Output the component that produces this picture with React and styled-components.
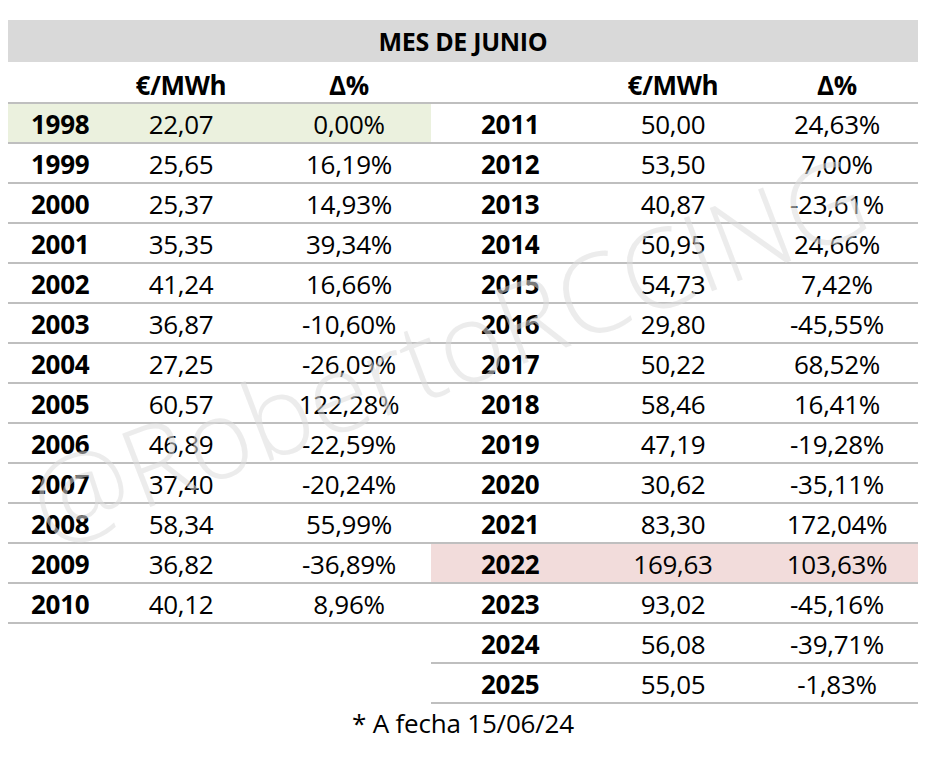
import React from "react";
import styled, { createGlobalStyle } from "styled-components";

const GlobalStyle = createGlobalStyle`
  html, body { margin: 0; padding: 0; background: #ffffff; }
  body { font-family: "Open Sans", "Noto Sans", sans-serif; color: #000; }
`;

const Page = styled.div`
  position: relative;
  width: 910px;
  padding: 20px 16px 0 8px;
  height: 740px;
`;

const TitleBar = styled.div`
  height: 42px;
  background: #d9d9d9;
  display: flex;
  align-items: center;
  justify-content: center;
  font-weight: 700;
  font-size: 25px;
  letter-spacing: -0.3px;
`;

const Halves = styled.div`
  display: flex;
`;

const Half = styled.div`
  width: ${(p) => p.$width}px;
  display: flex;
  flex-direction: column;
`;

const Row = styled.div`
  display: grid;
  grid-template-columns: ${(p) => p.$cols};
  padding-top: ${(p) => (p.$head ? 5 : 2)}px;
  box-sizing: border-box;
  height: ${(p) => (p.$head ? 42 : 40)}px;
  border-bottom: 2px solid #bfbfbf;
  background: ${(p) => p.$bg || "transparent"};
  align-items: center;
  font-size: 26px;
`;

const Year = styled.div`
  font-weight: 700;
  padding-left: ${(p) => p.$pad}px;
  letter-spacing: -0.3px;
`;

const Val = styled.div`
  text-align: center;
  padding-left: ${(p) => p.$pad || 0}px;
  font-weight: ${(p) => (p.$bold ? 700 : 400)};
  letter-spacing: -0.3px;
`;

const Footnote = styled.div`
  text-align: center;
  font-size: 26px;
  line-height: 38px;
  letter-spacing: -0.2px;
`;

const Watermark = styled.div`
  position: absolute;
  left: 447px;
  top: 292px;
  width: max-content;
  font-family: "Open Sans", sans-serif;
  font-weight: 300;
  font-size: 110px;
  line-height: 1;
  color: rgba(220, 220, 220, 0.55);
  transform: translateX(-50%) rotate(-21deg);
  transform-origin: 50% 50%;
  pointer-events: none;
  white-space: nowrap;
`;

const left = [
  ["1998", "22,07", "0,00%", "#ebf1de"],
  ["1999", "25,65", "16,19%"],
  ["2000", "25,37", "14,93%"],
  ["2001", "35,35", "39,34%"],
  ["2002", "41,24", "16,66%"],
  ["2003", "36,87", "-10,60%"],
  ["2004", "27,25", "-26,09%"],
  ["2005", "60,57", "122,28%"],
  ["2006", "46,89", "-22,59%"],
  ["2007", "37,40", "-20,24%"],
  ["2008", "58,34", "55,99%"],
  ["2009", "36,82", "-36,89%"],
  ["2010", "40,12", "8,96%"],
];

const right = [
  ["2011", "50,00", "24,63%"],
  ["2012", "53,50", "7,00%"],
  ["2013", "40,87", "-23,61%"],
  ["2014", "50,95", "24,66%"],
  ["2015", "54,73", "7,42%"],
  ["2016", "29,80", "-45,55%"],
  ["2017", "50,22", "68,52%"],
  ["2018", "58,46", "16,41%"],
  ["2019", "47,19", "-19,28%"],
  ["2020", "30,62", "-35,11%"],
  ["2021", "83,30", "172,04%"],
  ["2022", "169,63", "103,63%", "#f2dcdb"],
  ["2023", "93,02", "-45,16%"],
  ["2024", "56,08", "-39,71%"],
  ["2025", "55,05", "-1,83%"],
];

const LEFT_COLS = "107px 132px 184px";
const RIGHT_COLS = "159px 166px 162px";

function Table({ rows, width, cols, yearPad, pctPad }) {
  return (
    <Half $width={width}>
      <Row $head $cols={cols}>
        <Year $pad={yearPad}></Year>
        <Val $bold>€/MWh</Val>
        <Val $bold $pad={pctPad}>Δ%</Val>
      </Row>
      {rows.map(([y, p, d, bg]) => (
        <Row key={y} $cols={cols} $bg={bg}>
          <Year $pad={yearPad}>{y}</Year>
          <Val>{p}</Val>
          <Val $pad={pctPad}>{d}</Val>
        </Row>
      ))}
    </Half>
  );
}

export default function App() {
  return (
    <>
      <GlobalStyle />
      <Page>
        <TitleBar>MES DE JUNIO</TitleBar>
        <Halves>
          <Table rows={left} width={423} cols={LEFT_COLS} yearPad={23} pctPad={20} />
          <Table rows={right} width={487} cols={RIGHT_COLS} yearPad={50} pctPad={0} />
        </Halves>
        <Footnote>* A fecha 15/06/24</Footnote>
        <Watermark>@RobertoRCCING</Watermark>
      </Page>
    </>
  );
}
